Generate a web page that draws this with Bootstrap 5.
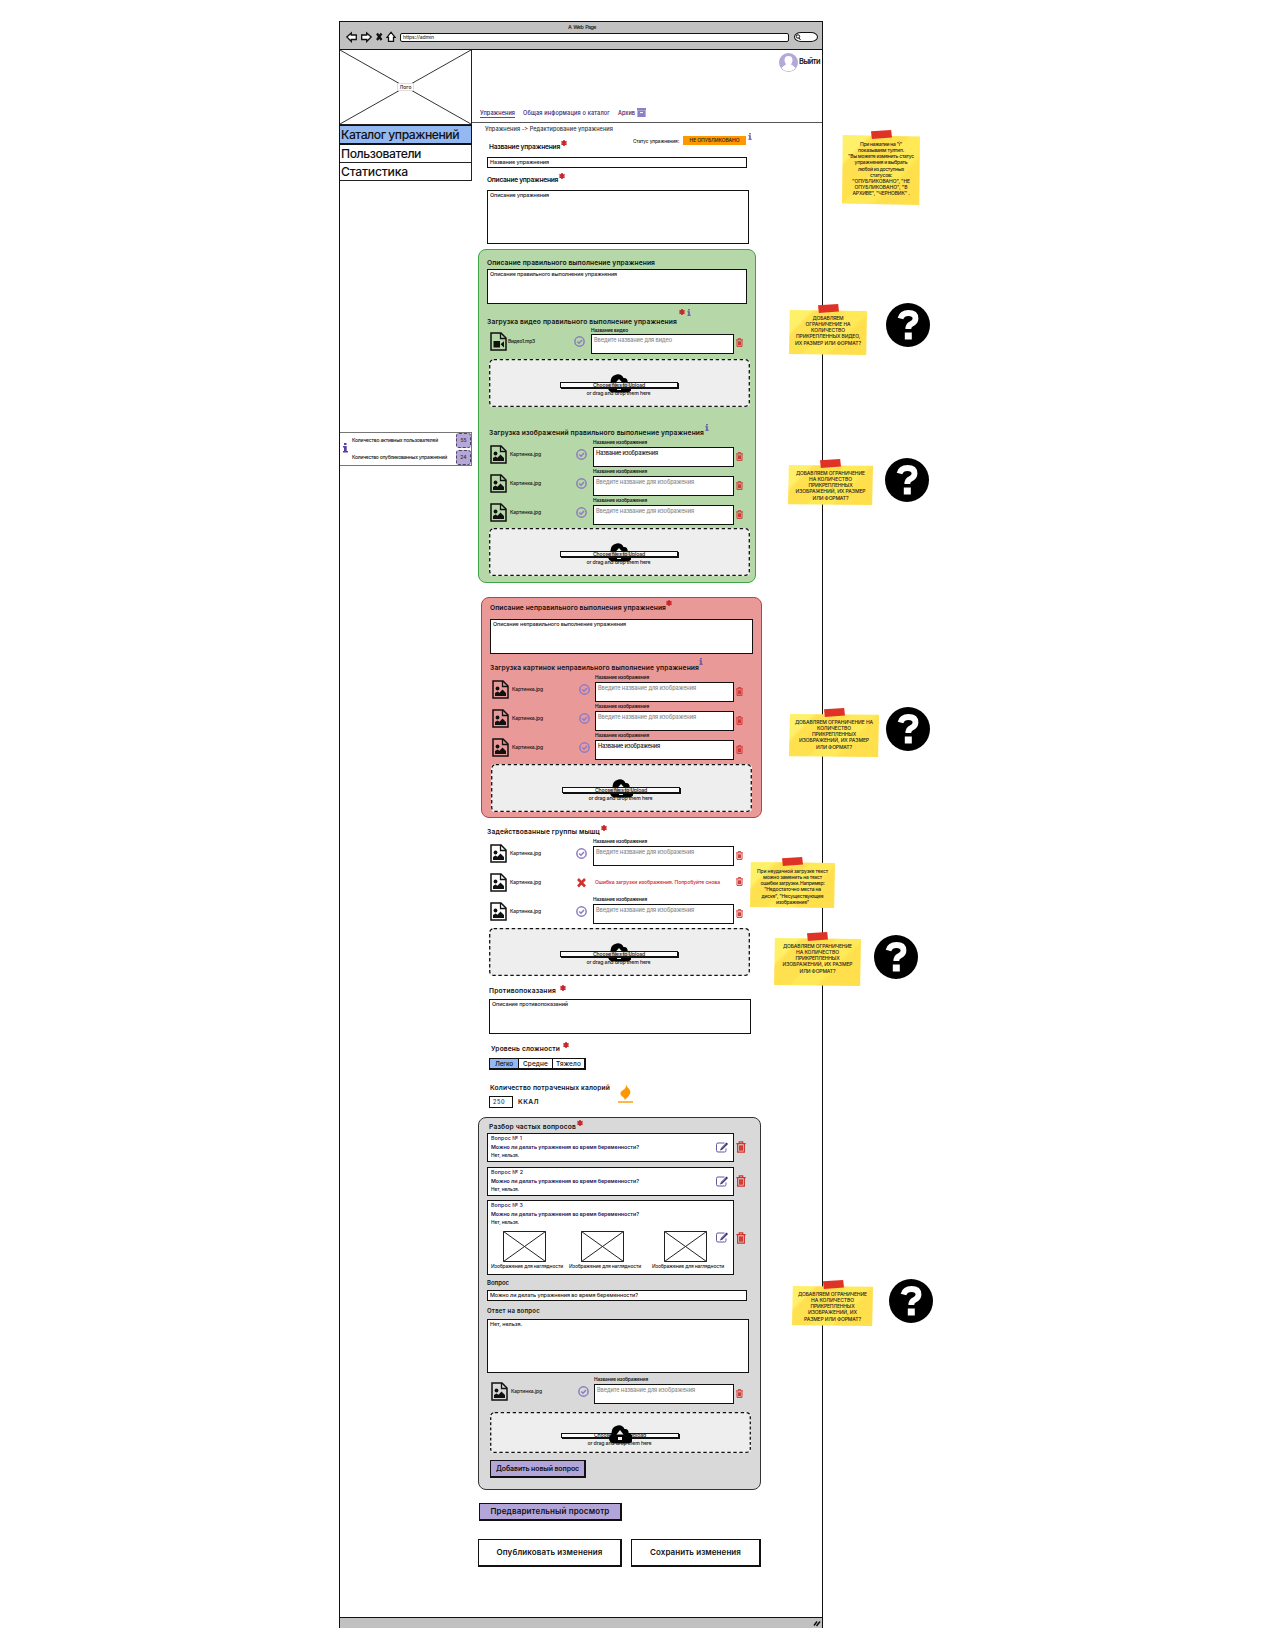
<!DOCTYPE html>
<html lang="ru">
<head>
<meta charset="utf-8">
<title>Редактирование упражнения</title>
<link href="https://cdn.jsdelivr.net/npm/bootstrap@5.3.0/dist/css/bootstrap.min.css" rel="stylesheet">
<script src="https://cdn.jsdelivr.net/npm/bootstrap@5.3.0/dist/js/bootstrap.bundle.min.js"></script>
<style>
body{width:1275px;height:1650px;overflow:hidden;background:#fff;color:#111;font-family:Inter,"Open Sans","Noto Sans",sans-serif;font-size:6px;line-height:8px;font-weight:500}
svg{display:block;flex:none}
.stage{width:1275px;height:1650px;padding:21px 0 0 339px}
.win{width:484px;height:1607px;border:1px solid #111}
.chrome{height:28px;background:#c1c1c1;border-bottom:1px solid #111;padding:1px 4px 0 6px}
.win-title{font-size:5.4px;height:8px}
.win-title span{word-spacing:1px}
.addr{width:390px;height:9px;margin-left:4px;border:1px solid #111;border-radius:2px;background:#fff;font-size:5px;line-height:7px;padding-left:2px;color:#333}
.find{width:24px;height:10px;border:1px solid #111;border-radius:7px/5px;background:#fff;margin-left:5px}
.win-body{height:1567px}
.foot{height:11px;background:#c1c1c1;border-top:1px solid #111;padding-right:1px}
.side{width:132px;flex:none}
.logo-box{height:75px;border-right:1px solid #222;border-bottom:1px solid #222}
.logo-box span{background:#fff;font-size:5px;line-height:6px;padding:0 2px;border:1px solid #ddd}
.menu-item{height:18px;border:1px solid #222;border-top:0;border-left:0;font-size:12.2px;line-height:17px;padding-left:1px}
.menu-item.on{background:#93b9f0;height:20px;border:1px solid #111;border-left:0;border-bottom-width:2px;line-height:17px}
.stats{margin-top:251px;height:34px;border:1px solid #777;border-left:0;padding-left:3px;font-size:5px}
.stats .lbls{margin-left:4px;width:109px;padding-top:3px}
.stats .lbls div{height:17px}
.num{width:15px;height:15px;border:1px dashed #4b4068;border-radius:3px;background:#b5a7d8;color:#333;line-height:13px;font-size:5px;text-align:center;margin-bottom:2px}
.main{width:350px;flex:none}
.top{height:73px;border-bottom:1px solid #555}
.user{font-size:7.4px;height:24px;padding:0 2px 0 0;gap:1px;font-weight:600}
.tabs{margin-top:35px;padding-left:8px;color:#33206e;font-size:5.6px;gap:8px;height:9px}
.tabs a{color:#33206e;text-decoration:none;white-space:nowrap}
.tabs a.on{border-bottom:1px solid #5b4a94}
.crumbs{height:10px;line-height:12px;padding-left:13px;font-size:5.6px;color:#333}
.fs{font-size:6.7px;font-weight:600;white-space:nowrap;line-height:8px;display:flex}
.star{width:6px;height:6px;color:#c8262a}
.inf{width:4px;height:7px}
.up{margin-top:-3px;margin-left:1px}
.box{background:#fff;border:1px solid #111;padding:1px 2px;font-size:5.4px;line-height:7px;white-space:nowrap}
.b11{height:11px}.b35{height:35px}.b54{height:54px}
.w260{width:260px}.w262{width:262px}.w263{width:263px}
.i8{margin-left:8px}.i9{margin-left:9px}.i10{margin-left:10px}.i16{margin-left:15px}.i18{margin-left:17px}.i19{margin-left:18px}.i20{margin-left:19px}
.status{font-size:4.7px;padding-top:3px}
.state{background:#ff9800;width:63px;height:9px;line-height:9px;text-align:center;font-size:5px;color:#222;margin-left:4px}
.panel{border:1px solid;border-radius:8px}
.ok{width:278px;height:334px;background:#b6d7a8;border-color:#3da648;margin:5px 0 0 6px}
.bad{width:281px;height:221px;background:#ea9999;border-color:#c43d3d;margin:14px 0 0 9px}
.faq{width:283px;height:373px;background:#d9d9d9;border-color:#333;margin:9px 0 0 6px}
.frow{display:grid;grid-template-columns:20px 66px 17px 141px 9px;height:29px;font-size:5px;width:253px}
.frow.v{grid-template-columns:18px 66px 17px 143px 9px}
.frow.r{grid-template-columns:20px 66.5px 16.5px 139px 9px}
.frow.f{grid-template-columns:20px 66.5px 16.5px 140px 9px}
.frow .ic{padding-top:7px}.frow .nm{padding-top:12px;white-space:nowrap}.frow .ck{padding-top:11px}.frow .tr{padding:14px 0 0 2px}
.lb{height:9px;line-height:9px;font-size:4.8px;font-weight:600;white-space:nowrap}
.fld{height:20px;border:1px solid #111;background:#fff;padding:1px 2px;font-size:5.6px;line-height:8px;color:#888;white-space:nowrap}
.fld.val{color:#111}
.err{color:#d01818;padding:12px 0 0 2px;font-size:5px;white-space:nowrap}
.drop{position:relative;width:261px;height:48px;border-radius:4px;background:#eee;margin-top:4px;padding-top:23px;font-size:5.2px}
.drop .edge{position:absolute;left:0;top:0}
.drop .cloud{position:absolute;left:118px;top:15px}
.pick{position:relative;width:118px;height:6px;border:1px solid #111;box-shadow:1px 1px 0 #111;background:#fffc;line-height:4px;margin-left:71px;text-align:center;white-space:nowrap}
.hint{position:relative;text-align:center;line-height:7px;margin-top:2px;margin-left:-2px}
.drop.low{height:41px;padding-top:21px}.drop.low .cloud{top:13px;z-index:2}.drop.low .pick{height:5px;line-height:3px}
.seg{height:12px;width:97px;border:1px solid #111;border-width:1px 2px 2px 1px;font-size:6.4px;line-height:10px;text-align:center;background:#fff}
.seg div+div{border-left:1px solid #111}
.seg .on{background:#93b9f0;width:28px}.seg .m{width:34px}
.kcal{width:24px;height:12px;border:1px solid #111;font-size:5.6px;line-height:10px;padding-left:3px;color:#333}
.q{width:247px;height:29px;border:1px solid #111;background:#fff;margin-bottom:5px;padding:0 4px 0 3px;font-size:5.3px}
.q.tall{height:75px;margin-bottom:0}
.tallrow{margin-top:-1px}
.q .n{color:#1d1457;height:9px;line-height:9px}.q .t{color:#1d1457;font-weight:600;line-height:9px;height:9px}.q .a{line-height:7px;height:7px;font-size:4.8px}
.pics{font-size:4.9px;line-height:7px;white-space:nowrap;padding-top:5px}
.pics .p{width:72px}
.pics svg{margin:0 0 1px 12px}
.pb{border:1px solid #111;border-width:1px 2px 2px 1px;border-radius:0;background:#b3a5d8;color:#111;padding:0;display:block;text-align:center;font-weight:600;white-space:nowrap}
.pb.add{width:96px;height:18px;line-height:15px;font-size:7px;margin-top:7px}
.pb.pre{width:143px;height:18px;line-height:15px;font-size:8px}
.pb.big{height:28px;line-height:25px;font-size:8px;background:#fff}
.note{position:absolute;text-align:center;background:linear-gradient(135deg,#fff06a 0 18%,#ffe14f 22% 45%,#ffe957 48% 65%,#ffdf4b 70%);clip-path:polygon(1% 0,100% 2%,99% 100%,0 98%);font-size:5px;line-height:6.13px;color:#222;white-space:nowrap;padding-top:5px}
.tape{position:absolute;width:21px;height:9px;background:#df3327;clip-path:polygon(0 14%,96% 0,100% 82%,4% 100%)}
.ask{position:absolute;width:44px;height:44px}
.n1{left:842px;top:135px;width:78px;height:70px;padding-top:6px}.n2{left:789px;top:310px;width:78px;height:45px}.n3{left:788px;top:465px;width:85px;height:40px}.n4{left:789px;top:714px;width:90px;height:43px}.n5{left:750px;top:862px;width:85px;height:46px;padding-top:6px}.n6{left:774px;top:938px;width:87px;height:48px}.n7{left:792px;top:1286px;width:81px;height:40px}
.p1{left:871px;top:130px}.p2{left:818px;top:304px}.p3{left:820px;top:459px}.p4{left:824px;top:708px}.p5{left:782px;top:857px}.p6{left:807px;top:932px}.p7{left:823px;top:1280px}
.a2{left:886px;top:303px}.a3{left:885px;top:458px}.a4{left:886px;top:707px}.a6{left:874px;top:935px}.a7{left:889px;top:1279px}
[data-w]{white-space:nowrap}
.g9{padding-top:9px;height:19px}.g13{padding-top:14px;height:22px}.g22{padding-top:22px;height:31px}.g6{padding-top:6px;height:21px}.g10{padding-top:10px;height:19px}.g8{padding-top:8px;height:22px}.g11{padding-top:11px;height:23px}.g12{padding-top:11px;height:24px}.g5{padding-top:5px;height:15px}.g3{padding-top:4px;height:15px}.g7{padding-top:6px;height:18px}
</style>
</head>
<body>
<svg width="0" height="0" class="position-absolute">
<symbol id="star" viewBox="0 0 12 12"><path d="M6 0v12M.8 3l10.4 6M11.2 3L.8 9" stroke="currentColor" stroke-width="3.2"/></symbol>
<symbol id="inf" viewBox="0 0 4 7"><path d="M1.200 0h1.500v1.400H1.200zM.4 2.300h2.300v3.500h1v1H.4v-1h.9V3.300H.4z" fill="#5b4a9e"/></symbol>
<symbol id="img" viewBox="0 0 17 19"><path d="M1 1h10l5 5v12H1z" fill="none" stroke="#111" stroke-width="1.5"/><path d="M10.500 1v5.500H16" fill="none" stroke="#111" stroke-width="1.300"/><circle cx="5.500" cy="8.500" r="1.900" fill="#111"/><path d="M3 16v-3l2.500-1.500 2 1.200 3-3.200 3.500 3.500v3z" fill="#111"/></symbol>
<symbol id="vid" viewBox="0 0 17 19"><path d="M1 1h10l5 5v12H1z" fill="none" stroke="#111" stroke-width="1.5"/><path d="M10.500 1v5.500H16" fill="none" stroke="#111" stroke-width="1.300"/><path d="M3.500 9h6.500v6.500H3.500zM10.500 12.200l3.500-3v6.300z" fill="#111"/></symbol>
<symbol id="chk" viewBox="0 0 22 22"><circle cx="11" cy="11" r="9.300" fill="none" stroke="#8d7cc3" stroke-width="3"/><path d="M6.500 11l3.500 3.500 6-6.500" fill="none" stroke="#8d7cc3" stroke-width="3"/></symbol>
<symbol id="bin" viewBox="0 0 14 18"><path d="M0 3.800h14M4.500 3.500V1.200h5v2.300M2 4.500v12.300h10V4.500M5 6.500v8M7 6.500v8M9 6.500v8" fill="none" stroke="#d0342f" stroke-width="1.900"/></symbol>
<symbol id="edit" viewBox="0 0 26 22"><path d="M18 2H5Q2 2 2 5v12q0 3 3 3h13q3 0 3-3v-4" fill="none" stroke="#4b3a8c" stroke-width="1.700"/><path d="M22 1l3 3-11 11-5 2 2-5z" fill="#33206e"/><path d="M12 13.500l9-9" stroke="#fff" stroke-width=".9"/></symbol>
<symbol id="cloud" viewBox="0 0 24 19"><path d="M5.500 18.500a5 5 0 0 1-2-9.300Q3 2 9.500.5q5-.8 7 3.500 4-.5 4.200 4a5.300 5.300 0 0 1-1.700 10.500z" fill="#000"/><path d="M12 5l4.500 5H14v3h-4v-3H7.500zM10 14.500h4v1.500h-4z" fill="#eee"/></symbol>
<symbol id="cloud2" viewBox="0 0 24 19"><path d="M5.500 18.500a5 5 0 0 1-2-9.300Q3 2 9.500.5q5-.8 7 3.500 4-.5 4.200 4a5.300 5.300 0 0 1-1.700 10.500z" fill="#000"/><path d="M12 5l3.500 4.500H8.500zM10 12h4v3h-4z" fill="#eee"/></symbol>
<symbol id="edge" viewBox="0 0 261 48" preserveAspectRatio="none"><rect x=".7" y=".7" width="259.600" height="46.600" rx="4" fill="none" stroke="#111" stroke-width="1.300" stroke-dasharray="3.400 2.600"/></symbol>
<symbol id="pic" viewBox="0 0 43 31"><path d="M.5.5h42v30H.5zM.5.5l42 30M42.500.5l-42 30" fill="#fff" stroke="#222" stroke-width="1"/></symbol>
<symbol id="ask" viewBox="0 0 44 44"><circle cx="22" cy="22" r="22" fill="#000"/><path d="M14.500 15.500Q16 10 22.500 10q7 0 7 5.500 0 3.500-4 5.300-3.200 1.500-3.200 5.200" fill="none" stroke="#fff" stroke-width="5.800"/><path d="M18.800 29.500h7v7h-7z" fill="#fff"/></symbol>
</svg>
<div class="stage">
<div class="win">
 <div class="chrome">
  <div class="win-title text-center"><span data-w="28">A Web Page</span></div>
  <div class="d-flex align-items-center">
   <svg width="50" height="12" viewBox="0 0 50 12" fill="#fff" stroke="#111" stroke-width="1.300"><path d="M.8 6l4.500-4v2h5v4.500h-5v2zM25.200 6l-4.500-4v2h-5v4.500h5v2z"/><path d="M31 2.500l4.500 6.500M35.500 2.500L31 9" stroke-width="2.200"/><path d="M41 6.300L45 1.200l4 5.100h-1.500v4h-5v-4z"/></svg>
   <div class="addr"><span data-w="31">https://admin</span></div>
   <div class="find"><svg width="7" height="8" viewBox="0 0 7 8" fill="none" stroke="#111"><circle cx="3" cy="3.500" r="1.700"/><path d="M4 5l1.500 2"/></svg></div>
  </div>
 </div>
 <div class="win-body d-flex">
  <aside class="side">
   <div class="logo-box position-relative d-flex align-items-center justify-content-center">
    <svg class="position-absolute top-0 start-0" width="131" height="74"><path d="M0 0L131 74M131 0L0 74" stroke="#333" stroke-width="1"/></svg>
    <span class="position-relative">Лого</span>
   </div>
   <div class="menu-item on"><span data-w="118">Каталог упражнений</span></div>
   <div class="menu-item"><span data-w="80">Пользователи</span></div>
   <div class="menu-item"><span data-w="67">Статистика</span></div>
   <div class="stats d-flex">
    <svg style="margin-top:10px" width="5" height="11" viewBox="0 0 5 11"><path d="M1 0h2.500v2H1zM0 3h3.700v5H5v1.500H0V8h1V4.500H0z" fill="#5b3f9e"/></svg>
    <div class="lbls"><div><span data-w="86">Количество активных пользователей</span></div><div><span data-w="95">Количество опубликованных упражнений</span></div></div>
    <div class="ms-auto"><div class="num">55</div><div class="num">24</div></div>
   </div>
  </aside>
  <main class="main">
   <div class="top">
    <div class="user d-flex justify-content-end align-items-center">
     <svg width="19" height="19" viewBox="0 0 38 38"><circle cx="19" cy="19" r="19" fill="#b5a7d8"/><path d="M5 30q5-6 9-7-3-4-3-9 0-8 8-8t8 8q0 5-3 9 4 1 9 7-6 6.500-14 6.500T5 30z" fill="#fff"/></svg>
     <span data-w="21">Выйти</span>
    </div>
    <div class="tabs d-flex"><a class="on" href="#" data-w="35">Упражнения</a><a href="#" data-w="87">Общая информация о каталог</a><a href="#" data-w="17">Архив</a><svg style="margin:-1px 0 0 -6px" width="9" height="9" viewBox="0 0 9 9"><path d="M0 0h9v2.200H0zM.4 2.600h8.200V9H.4z" fill="#8f7fc4"/><path d="M3 4.600h3" stroke="#fff"/></svg></div>
   </div>
   <div class="crumbs"><span data-w="127">Упражнения -&gt; Редактирование упражнения</span></div>
   <div class="d-flex" style="height:24px">
    <div class="fs i18" style="padding-top:10px"><span data-w="71">Название упражнения</span><svg class="star up"><use href="#star"/></svg></div>
    <div class="status d-flex" style="margin-left:66px"><span data-w="46" style="padding-top:1px">Статус упражнения:</span><span class="state"><span data-w="50">НЕ ОПУБЛИКОВАНО</span></span><svg class="inf" style="margin:-3px 0 0 2px"><use href="#inf"/></svg></div>
   </div>
   <div class="box b11 w260 i16"><span data-w="59">Название упражнения</span></div>
   <div class="fs i16 g8"><span data-w="71">Описание упражнения</span><svg class="star up"><use href="#star"/></svg></div>
   <div class="box b54 w262 i16"><span data-w="59">Описание упражнения</span></div>

   <section class="panel ok">
    <div class="fs i8 g9"><span data-w="168">Описание правильного выполнение упражнения</span></div>
    <div class="box b35 w260 i8"><span data-w="127">Описание правильного выполнение упражнения</span></div>
    <div class="fs i8 g13"><span data-w="190">Загрузка видео правильного выполнение упражнения</span><svg class="star" style="margin:-9px 0 0 2px"><use href="#star"/></svg><svg class="inf" style="margin:-9px 0 0 2px"><use href="#inf"/></svg></div>
    <div class="frow v" style="margin-left:11px"><div class="ic" style="padding-top:6px"><svg width="17" height="19"><use href="#vid"/></svg></div><div class="nm" style="padding-top:11px"><span data-w="27">Видео1.mp3</span></div><div class="ck" style="padding-top:10px"><svg width="11" height="11"><use href="#chk"/></svg></div><div><div class="lb" style="height:8px"><span data-w="37">Название видео</span></div><div class="fld"><span data-w="78">Введите название для видео</span></div></div><div class="tr" style="padding-top:12px"><svg width="7" height="9"><use href="#bin"/></svg></div></div>
    <div class="drop i10"><svg class="edge" width="261" height="48"><use href="#edge"/></svg><svg class="cloud" width="24" height="19"><use href="#cloud"/></svg><div class="pick"><span data-w="52">Choose files to Upload</span></div><div class="hint"><span data-w="64">or drag and drop them here</span></div></div>
    <div class="fs i10 g22"><span data-w="215">Загрузка изображений правильного выполнение упражнения</span><svg class="inf up" style="margin-top:-5px"><use href="#inf"/></svg></div>
    <div class="frow" style="margin-left:11px"><div class="ic"><svg width="17" height="19"><use href="#img"/></svg></div><div class="nm"><span data-w="31">Картинка.jpg</span></div><div class="ck"><svg width="11" height="11"><use href="#chk"/></svg></div><div><div class="lb"><span data-w="54">Название изображения</span></div><div class="fld val"><span data-w="62">Название изображения</span></div></div><div class="tr"><svg width="7" height="9"><use href="#bin"/></svg></div></div>
    <div class="frow" style="margin-left:11px"><div class="ic"><svg width="17" height="19"><use href="#img"/></svg></div><div class="nm"><span data-w="31">Картинка.jpg</span></div><div class="ck"><svg width="11" height="11"><use href="#chk"/></svg></div><div><div class="lb"><span data-w="54">Название изображения</span></div><div class="fld"><span data-w="98">Введите название для изображения</span></div></div><div class="tr"><svg width="7" height="9"><use href="#bin"/></svg></div></div>
    <div class="frow" style="margin-left:11px"><div class="ic"><svg width="17" height="19"><use href="#img"/></svg></div><div class="nm"><span data-w="31">Картинка.jpg</span></div><div class="ck"><svg width="11" height="11"><use href="#chk"/></svg></div><div><div class="lb"><span data-w="54">Название изображения</span></div><div class="fld"><span data-w="98">Введите название для изображения</span></div></div><div class="tr"><svg width="7" height="9"><use href="#bin"/></svg></div></div>
    <div class="drop i10" style="margin-top:3px"><svg class="edge" width="261" height="48"><use href="#edge"/></svg><svg class="cloud" width="24" height="19"><use href="#cloud"/></svg><div class="pick"><span data-w="52">Choose files to Upload</span></div><div class="hint"><span data-w="64">or drag and drop them here</span></div></div>
   </section>

   <section class="panel bad">
    <div class="fs i8 g6"><span data-w="176">Описание неправильного выполнения упражнения</span><svg class="star" style="margin:-4px 0 0 0"><use href="#star"/></svg></div>
    <div class="box b35 w263 i8"><span data-w="133">Описание неправильного выполнение упражнения</span></div>
    <div class="fs i8 g10"><span data-w="209">Загрузка картинок неправильного выполнение упражнения</span><svg class="inf" style="margin-top:-6px"><use href="#inf"/></svg></div>
    <div class="frow r" style="margin-left:10px"><div class="ic"><svg width="17" height="19"><use href="#img"/></svg></div><div class="nm"><span data-w="31">Картинка.jpg</span></div><div class="ck"><svg width="11" height="11"><use href="#chk"/></svg></div><div><div class="lb"><span data-w="54">Название изображения</span></div><div class="fld"><span data-w="98">Введите название для изображения</span></div></div><div class="tr"><svg width="7" height="9"><use href="#bin"/></svg></div></div>
    <div class="frow r" style="margin-left:10px"><div class="ic"><svg width="17" height="19"><use href="#img"/></svg></div><div class="nm"><span data-w="31">Картинка.jpg</span></div><div class="ck"><svg width="11" height="11"><use href="#chk"/></svg></div><div><div class="lb"><span data-w="54">Название изображения</span></div><div class="fld"><span data-w="98">Введите название для изображения</span></div></div><div class="tr"><svg width="7" height="9"><use href="#bin"/></svg></div></div>
    <div class="frow r" style="margin-left:10px"><div class="ic"><svg width="17" height="19"><use href="#img"/></svg></div><div class="nm"><span data-w="31">Картинка.jpg</span></div><div class="ck"><svg width="11" height="11"><use href="#chk"/></svg></div><div><div class="lb"><span data-w="54">Название изображения</span></div><div class="fld val"><span data-w="62">Название изображения</span></div></div><div class="tr"><svg width="7" height="9"><use href="#bin"/></svg></div></div>
    <div class="drop i9"><svg class="edge" width="261" height="48"><use href="#edge"/></svg><svg class="cloud" width="24" height="19"><use href="#cloud"/></svg><div class="pick"><span data-w="52">Choose files to Upload</span></div><div class="hint"><span data-w="64">or drag and drop them here</span></div></div>
   </section>

   <div class="fs i16 g10"><span data-w="113">Задействованные группы мышц</span><svg class="star up"><use href="#star"/></svg></div>
   <div class="frow i19"><div class="ic"><svg width="17" height="19"><use href="#img"/></svg></div><div class="nm"><span data-w="31">Картинка.jpg</span></div><div class="ck"><svg width="11" height="11"><use href="#chk"/></svg></div><div><div class="lb"><span data-w="54">Название изображения</span></div><div class="fld"><span data-w="98">Введите название для изображения</span></div></div><div class="tr"><svg width="7" height="9"><use href="#bin"/></svg></div></div>
   <div class="frow i19"><div class="ic"><svg width="17" height="19"><use href="#img"/></svg></div><div class="nm"><span data-w="31">Картинка.jpg</span></div><div class="ck"><svg width="11" height="11" viewBox="0 0 11 11"><path d="M2 2l7 7.500M9 2L2 9.500" stroke="#d0342f" stroke-width="2.600"/></svg></div><div class="err"><span data-w="125">Ошибка загрузки изображения. Попробуйте снова</span></div><div class="tr" style="padding-top:11px"><svg width="7" height="9"><use href="#bin"/></svg></div></div>
   <div class="frow i19"><div class="ic"><svg width="17" height="19"><use href="#img"/></svg></div><div class="nm"><span data-w="31">Картинка.jpg</span></div><div class="ck"><svg width="11" height="11"><use href="#chk"/></svg></div><div><div class="lb"><span data-w="54">Название изображения</span></div><div class="fld"><span data-w="98">Введите название для изображения</span></div></div><div class="tr"><svg width="7" height="9"><use href="#bin"/></svg></div></div>
   <div class="drop i18"><svg class="edge" width="261" height="48"><use href="#edge"/></svg><svg class="cloud" width="24" height="19"><use href="#cloud"/></svg><div class="pick"><span data-w="52">Choose files to Upload</span></div><div class="hint"><span data-w="64">or drag and drop them here</span></div></div>

   <div class="fs i18 g11"><span data-w="67">Противопоказания</span><svg class="star" style="margin:-2px 0 0 4px"><use href="#star"/></svg></div>
   <div class="box b35 w262 i18"><span data-w="76">Описание противопоказаний</span></div>
   <div class="fs i20 g12"><span data-w="69">Уровень сложности</span><svg class="star" style="margin:-3px 0 0 3px"><use href="#star"/></svg></div>
   <div class="seg d-flex i18"><div class="on"><span data-w="18">Легко</span></div><div class="m"><span data-w="25">Средне</span></div><div class="flex-fill"><span data-w="25">Тяжело</span></div></div>
   <div class="d-flex i18" style="height:38px">
    <div><div class="fs" style="padding:14px 0 0 1px;height:26px"><span data-w="120">Количество потраченных калорий</span></div><div class="d-flex"><div class="kcal"><span data-w="12">250</span></div><div class="fs" style="padding:2px 0 0 5px"><span data-w="21">ККАЛ</span></div></div></div>
    <svg style="margin:14px 0 0 8px" width="15" height="19" viewBox="0 0 15 19"><path d="M0 18h15" stroke="#f90" stroke-width="1.400"/><path d="M8 .5q1 2.500 3.500 5 2 3-.5 6-1 1.800-4.500 4.500.5-2-1.500-3Q2 11 2.500 8.500 3 7 6.500 5 8.500 3 8 .5z" fill="#ff9800"/></svg>
   </div>

   <section class="panel faq">
    <div class="fs i10 g5"><span data-w="87">Разбор частых вопросов</span><svg class="star up"><use href="#star"/></svg></div>
    <div class="d-flex i8"><div class="q d-flex justify-content-between"><div><div class="n"><span data-w="31">Вопрос № 1</span></div><div class="t"><span data-w="148">Можно ли делать упражнения во время беременности?</span></div><div class="a"><span data-w="28">Нет, нельзя.</span></div></div><svg style="margin-top:8px" width="14" height="11"><use href="#edit"/></svg></div><svg style="margin:8px 0 0 2px" width="10" height="12"><use href="#bin"/></svg></div>
    <div class="d-flex i8"><div class="q d-flex justify-content-between"><div><div class="n"><span data-w="32">Вопрос № 2</span></div><div class="t"><span data-w="148">Можно ли делать упражнения во время беременности?</span></div><div class="a"><span data-w="28">Нет, нельзя.</span></div></div><svg style="margin-top:8px" width="14" height="11"><use href="#edit"/></svg></div><svg style="margin:8px 0 0 2px" width="10" height="12"><use href="#bin"/></svg></div>
    <div class="d-flex i8 tallrow"><div class="q tall d-flex justify-content-between"><div><div class="n"><span data-w="32">Вопрос № 3</span></div><div class="t"><span data-w="148">Можно ли делать упражнения во время беременности?</span></div><div class="a"><span data-w="28">Нет, нельзя.</span></div>
      <div class="pics d-flex" style="width:224px"><div class="p"><svg width="43" height="31"><use href="#pic"/></svg><span data-w="72">Изображение для наглядности</span></div><div class="p" style="margin-left:6px"><svg width="43" height="31"><use href="#pic"/></svg><span data-w="72">Изображение для наглядности</span></div><div class="p" style="margin-left:11px"><svg width="43" height="31"><use href="#pic"/></svg><span data-w="72">Изображение для наглядности</span></div></div></div><svg style="margin-top:31px" width="14" height="11"><use href="#edit"/></svg></div><svg style="margin:32px 0 0 2px" width="10" height="12"><use href="#bin"/></svg></div>
    <div class="fs i8 g3" style="font-size:6px"><span data-w="22">Вопрос</span></div>
    <div class="box b11 w260 i8"><span data-w="148">Можно ли делать упражнения во время беременности?</span></div>
    <div class="fs i8 g7" style="font-size:6px"><span data-w="53">Ответ на вопрос</span></div>
    <div class="box b54 w262 i8"><span data-w="32">Нет, нельзя.</span></div>
    <div class="frow f" style="margin:2px 0 0 12px"><div class="ic"><svg width="17" height="19"><use href="#img"/></svg></div><div class="nm"><span data-w="31">Картинка.jpg</span></div><div class="ck"><svg width="11" height="11"><use href="#chk"/></svg></div><div><div class="lb"><span data-w="54">Название изображения</span></div><div class="fld"><span data-w="98">Введите название для изображения</span></div></div><div class="tr"><svg width="7" height="9"><use href="#bin"/></svg></div></div>
    <div class="drop low" style="margin:8px 0 0 11px"><svg class="edge" width="261" height="41"><use href="#edge"/></svg><svg class="cloud" width="24" height="19"><use href="#cloud2"/></svg><div class="pick"><span data-w="52">Choose files to Upload</span></div><div class="hint"><span data-w="64">or drag and drop them here</span></div></div>
    <button class="btn pb add" style="margin-left:11px"><span data-w="83">Добавить новый вопрос</span></button>
   </section>
   <button class="btn pb pre" style="margin:13px 0 0 7px"><span data-w="119">Предварительный просмотр</span></button>
   <div class="d-flex" style="margin:18px 0 0 6px;gap:9px"><button class="btn pb big" style="width:144px"><span data-w="106">Опубликовать изменения</span></button><button class="btn pb big" style="width:130px"><span data-w="91">Сохранить изменения</span></button></div>
  </main>
 </div>
 <div class="foot d-flex justify-content-end align-items-center"><svg width="8" height="7" viewBox="0 0 8 7"><path d="M1 5.500l3-4M3.500 6l3.500-4.500" stroke="#111" stroke-width="1.500"/></svg></div>
</div>
</div>
<div class="note n1"><span data-w="42">При нажатии на "i"</span><br><span data-w="46">показываем тултип.</span><br><span data-w="66">"Вы можете изменить статус</span><br><span data-w="53">упражнения и выбрать</span><br><span data-w="46">любой из доступных</span><br><span data-w="22">статусов:</span><br><span data-w="58">"ОПУБЛИКОВАНО", "НЕ</span><br><span data-w="53">ОПУБЛИКОВАНО", "В</span><br><span data-w="57">АРХИВЕ", "ЧЕРНОВИК" .</span></div><div class="tape p1"></div>
<div class="note n2"><span data-w="31">ДОБАВЛЯЕМ</span><br><span data-w="45">ОГРАНИЧЕНИЕ НА</span><br><span data-w="34">КОЛИЧЕСТВО</span><br><span data-w="64">ПРИКРЕПЛЕННЫХ ВИДЕО,</span><br><span data-w="66">ИХ РАЗМЕР ИЛИ ФОРМАТ?</span></div><div class="tape p2"></div>
<div class="note n3"><span data-w="69">ДОБАВЛЯЕМ ОГРАНИЧЕНИЕ</span><br><span data-w="43">НА КОЛИЧЕСТВО</span><br><span data-w="44">ПРИКРЕПЛЕННЫХ</span><br><span data-w="70">ИЗОБРАЖЕНИЙ, ИХ РАЗМЕР</span><br><span data-w="36">ИЛИ ФОРМАТ?</span></div><div class="tape p3"></div>
<div class="note n4"><span data-w="78">ДОБАВЛЯЕМ ОГРАНИЧЕНИЕ НА</span><br><span data-w="34">КОЛИЧЕСТВО</span><br><span data-w="44">ПРИКРЕПЛЕННЫХ</span><br><span data-w="70">ИЗОБРАЖЕНИЙ, ИХ РАЗМЕР</span><br><span data-w="36">ИЛИ ФОРМАТ?</span></div><div class="tape p4"></div>
<div class="note n5"><span data-w="71">При неудачной загрузке текст</span><br><span data-w="59">можно заменить на текст</span><br><span data-w="64">ошибки загрузки. Например:</span><br><span data-w="57">"Недостаточно места на</span><br><span data-w="62">диске", "Несуществующее</span><br><span data-w="33">изображение"</span></div><div class="tape p5"></div>
<div class="note n6"><span data-w="69">ДОБАВЛЯЕМ ОГРАНИЧЕНИЕ</span><br><span data-w="43">НА КОЛИЧЕСТВО</span><br><span data-w="44">ПРИКРЕПЛЕННЫХ</span><br><span data-w="70">ИЗОБРАЖЕНИЙ, ИХ РАЗМЕР</span><br><span data-w="36">ИЛИ ФОРМАТ?</span></div><div class="tape p6"></div>
<div class="note n7"><span data-w="69">ДОБАВЛЯЕМ ОГРАНИЧЕНИЕ</span><br><span data-w="43">НА КОЛИЧЕСТВО</span><br><span data-w="44">ПРИКРЕПЛЕННЫХ</span><br><span data-w="49">ИЗОБРАЖЕНИЙ, ИХ</span><br><span data-w="57">РАЗМЕР ИЛИ ФОРМАТ?</span></div><div class="tape p7"></div>
<svg class="ask a2"><use href="#ask"/></svg><svg class="ask a3"><use href="#ask"/></svg><svg class="ask a4"><use href="#ask"/></svg><svg class="ask a6"><use href="#ask"/></svg><svg class="ask a7"><use href="#ask"/></svg>
<script>
/* Track every label so that it takes the width given in data-w. */
document.querySelectorAll('[data-w]').forEach(function(el){
  var r=document.createRange();r.selectNodeContents(el);
  var n=el.textContent.length,w=r.getBoundingClientRect().width;
  el.style.letterSpacing=((+el.dataset.w-w)/n).toFixed(3)+'px';
});
</script>
</body>
</html>
